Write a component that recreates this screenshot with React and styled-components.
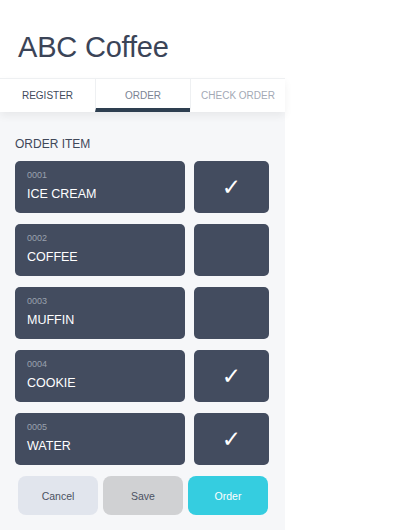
import React, { useState } from 'react';
import styled, { createGlobalStyle } from 'styled-components';

const GlobalStyle = createGlobalStyle`
    body {
        margin: 0;
        background: #ffffff;
        font-family: "Liberation Sans", Arial, sans-serif;
    }
`

const items = [
    { code: '0001', name: 'ICE CREAM', checked: true },
    { code: '0002', name: 'COFFEE', checked: false },
    { code: '0003', name: 'MUFFIN', checked: false },
    { code: '0004', name: 'COOKIE', checked: true },
    { code: '0005', name: 'WATER', checked: true },
];

function App() {
    const [list, setList] = useState(items);

    const toggle = (i) => {
        setList(list.map((item, idx) => idx === i ? { ...item, checked: !item.checked } : item));
    };

    return (
        <Wrapper>
            <GlobalStyle />
            <Header>
                <Title>ABC Coffee</Title>
            </Header>
            <Tabs>
                <Tab>REGISTER</Tab>
                <Tab active>ORDER</Tab>
                <Tab muted>CHECK ORDER</Tab>
            </Tabs>
            <Body>
                <Label>ORDER ITEM</Label>
                <List>
                    {list.map((item, index) => (
                        <Row key={item.code}>
                            <ItemCard>
                                <Code>{item.code}</Code>
                                <Name>{item.name}</Name>
                            </ItemCard>
                            <CheckBox onClick={() => toggle(index)}>
                                {item.checked && '✓'}
                            </CheckBox>
                        </Row>
                    ))}
                </List>
                <Buttons>
                    <Button kind="cancel">Cancel</Button>
                    <Button kind="save">Save</Button>
                    <Button kind="order">Order</Button>
                </Buttons>
            </Body>
        </Wrapper>
    )
}

export default App

const Wrapper = styled.div`
    width: 285px;
    height: 530px;
    background: #f6f7f9;
    display: flex;
    flex-direction: column;
`

const Header = styled.div`
    background: #ffffff;
    height: 78px;
    box-sizing: border-box;
    padding: 0 18px 14px;
    display: flex;
    align-items: flex-end;
`

const Title = styled.h1`
    margin: 0;
    font-size: 29px;
    line-height: 33px;
    font-weight: 400;
    color: #3b4457;
    letter-spacing: -0.2px;
`

const Tabs = styled.div`
    display: grid;
    grid-template-columns: 95px 95px 95px;
    height: 33px;
    background: #ffffff;
    border-top: 1px solid #eef0f2;
    box-shadow: 0 4px 8px rgba(0, 0, 0, 0.06);
    position: relative;
    z-index: 1;
`

const Tab = styled.div`
    display: flex;
    align-items: center;
    justify-content: center;
    font-size: 10px;
    color: ${props => props.active ? '#7b8494' : props.muted ? '#a3a9b5' : '#414a5c'};
    border-left: ${props => props.active || props.muted ? '1px solid #eef0f2' : 'none'};
    border-bottom: 4px solid ${props => props.active ? '#2e3f50' : 'transparent'};
    padding-top: 3px;
`

const Body = styled.div`
    flex: 1;
    padding: 25px 16px 0 15px;
    display: flex;
    flex-direction: column;
`

const Label = styled.div`
    font-size: 12px;
    color: #3f4859;
    margin-bottom: 10px;
`

const List = styled.div`
    display: flex;
    flex-direction: column;
    gap: 11px;
`

const Row = styled.div`
    display: flex;
    gap: 9px;
    height: 52px;
`

const ItemCard = styled.div`
    width: 170px;
    box-sizing: border-box;
    background: #434c5f;
    border-radius: 5px;
    padding: 9px 12px 0;
    display: flex;
    flex-direction: column;
`

const Code = styled.div`
    font-size: 9px;
    color: #9aa1ae;
    height: 13px;
`

const Name = styled.div`
    font-size: 12.5px;
    color: #ffffff;
    margin-top: 4px;
`

const CheckBox = styled.div`
    width: 75px;
    background: #434c5f;
    border-radius: 5px;
    display: flex;
    align-items: center;
    justify-content: center;
    color: #ffffff;
    font-family: "DejaVu Sans", sans-serif;
    font-size: 23px;
    font-weight: 700;
    cursor: pointer;
`

const buttonColors = {
    cancel: { bg: '#e1e5ed', fg: '#4b5262' },
    save: { bg: '#d0d1d3', fg: '#4b5262' },
    order: { bg: '#35cde0', fg: '#ffffff' },
};

const Buttons = styled.div`
    display: grid;
    grid-template-columns: 80px 80px 80px;
    gap: 5px;
    margin-top: 11px;
    padding-left: 3px;
`

const Button = styled.button`
    height: 39px;
    border: none;
    border-radius: 8px;
    font-family: "Liberation Sans", Arial, sans-serif;
    font-size: 10.5px;
    background: ${props => buttonColors[props.kind].bg};
    color: ${props => buttonColors[props.kind].fg};
`
